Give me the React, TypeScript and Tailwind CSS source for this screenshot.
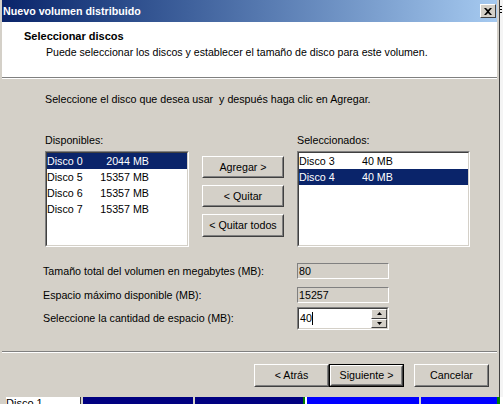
const font = { fontFamily: '"Liberation Sans", Arial, sans-serif' }

const available = [
  { name: "Disco 0", size: "2044 MB", selected: true },
  { name: "Disco 5", size: "15357 MB" },
  { name: "Disco 6", size: "15357 MB" },
  { name: "Disco 7", size: "15357 MB" },
]

const chosen = [
  { name: "Disco 3", size: "40 MB" },
  { name: "Disco 4", size: "40 MB", selected: true },
]

function Sunken({ className, children }: { className?: string; children?: React.ReactNode }) {
  return (
    <div className={`border border-t-[#808080] border-l-[#808080] border-b-white border-r-white ${className ?? ""}`}>
      <div className="h-full border border-t-[#404040] border-l-[#404040] border-b-[#d4d0c8] border-r-[#d4d0c8] bg-white">
        {children}
      </div>
    </div>
  )
}

function Button({ label, className, isDefault }: { label: string; className?: string; isDefault?: boolean }) {
  const inner = (
    <div className="h-full border border-t-white border-l-white border-b-[#404040] border-r-[#404040]">
      <div className="h-full flex items-center justify-center border border-t-[#d4d0c8] border-l-[#d4d0c8] border-b-[#808080] border-r-[#808080] text-[10.7px] text-black whitespace-nowrap">
        {label}
      </div>
    </div>
  )
  if (isDefault) {
    return <div className={`border border-black ${className ?? ""}`}>{inner}</div>
  }
  return <div className={className}>{inner}</div>
}

export default function App() {
  return (
    <div className="w-[503px] h-[404px] overflow-hidden flex flex-col bg-white" style={font}>
      <div className="flex h-[397px]">
        {/* window */}
        <div className="w-[500px] h-[398px] flex flex-col bg-[#d4d0c8] pl-[2px] pr-[2px] border-r border-b border-[#404040]">
          {/* title bar */}
          <div className="h-[22px] shrink-0 flex items-center justify-between pl-[1px] pr-[1px] bg-gradient-to-r from-[#0a246a] to-[#a6caf0]">
            <span className="text-[10.7px] font-bold text-white leading-none">Nuevo volumen distribuido</span>
            <div className="w-[16px] h-[14px] border border-t-white border-l-white border-b-[#404040] border-r-[#404040] bg-[#d4d0c8] flex items-center justify-center">
              <svg width="8" height="7" viewBox="0 0 8 7">
                <path d="M0 0h2l2 2 2-2h2L5 3.5 8 7H6L4 5 2 7H0l3-3.5z" fill="black" />
              </svg>
            </div>
          </div>

          {/* header */}
          <div className="h-[55px] shrink-0 bg-white pt-[8px] text-black">
            <div className="pl-[22px] text-[11px] font-bold leading-[13px]">Seleccionar discos</div>
            <div className="pl-[44px] mt-[3px] text-[10.6px] leading-[13px]">
              Puede seleccionar los discos y establecer el tamaño de disco para este volumen.
            </div>
          </div>
          <div className="h-[2px] shrink-0 border-t border-b border-t-[#808080] border-b-white" />

          {/* body */}
          <div className="h-[272px] shrink-0 pl-[43px] pt-[14px] text-[10.7px] leading-[13px] text-black">
            <div>Seleccione el disco que desea usar &nbsp;y después haga clic en Agregar.</div>

            <div className="flex mt-[28px]">
              <div className="w-[144px]">
                <div>Disponibles:</div>
                <Sunken className="mt-[4px] h-[96px]">
                  {available.map((d) => (
                    <div
                      key={d.name}
                      className={`flex h-[16px] items-center whitespace-nowrap ${d.selected ? "bg-[#0a246a] text-white" : ""}`}
                    >
                      <span className="w-[50px]">{d.name}</span>
                      <span className="w-[52px] text-right">{d.size}</span>
                    </div>
                  ))}
                </Sunken>
              </div>

              <div className="ml-[13px] pt-[22px] flex flex-col gap-[7px]">
                <Button label="Agregar >" className="w-[82px] h-[22px]" />
                <Button label="< Quitar" className="w-[82px] h-[22px]" />
                <Button label="< Quitar todos" className="w-[82px] h-[23px]" />
              </div>

              <div className="ml-[13px] w-[173px]">
                <div>Seleccionados:</div>
                <Sunken className="mt-[4px] h-[96px]">
                  {chosen.map((d) => (
                    <div
                      key={d.name}
                      className={`flex h-[16px] items-center whitespace-nowrap ${d.selected ? "bg-[#0a246a] text-white" : ""}`}
                    >
                      <span className="w-[63px]">{d.name}</span>
                      <span>{d.size}</span>
                    </div>
                  ))}
                </Sunken>
              </div>
            </div>

            {/* fields */}
            <div className="-ml-[2px] mt-[16px] flex flex-col">
              <div className="flex items-center h-[16px]">
                <span className="w-[254px]">Tamaño total del volumen en megabytes (MB):</span>
                <div className="w-[92px] h-[16px] border border-t-[#808080] border-l-[#808080] border-b-white border-r-white pl-[1px] flex items-center">
                  80
                </div>
              </div>
              <div className="flex items-center h-[16px] mt-[8px]">
                <span className="w-[254px]">Espacio máximo disponible (MB):</span>
                <div className="w-[92px] h-[16px] border border-t-[#808080] border-l-[#808080] border-b-white border-r-white pl-[1px] flex items-center">
                  15257
                </div>
              </div>
              <div className="flex items-center h-[23px] mt-[4px]">
                <span className="w-[254px]">Seleccione la cantidad de espacio (MB):</span>
                <Sunken className="w-[92px] h-[23px]">
                  <div className="h-full flex items-center">
                    <span className="pl-[1px]">40</span>
                    <span className="w-[1px] h-[13px] bg-black" />
                    <div className="ml-auto h-full flex flex-col">
                      {["up", "down"].map((dir) => (
                        <div
                          key={dir}
                          className="w-[16px] h-[10px] flex-1 flex items-center justify-center bg-[#d4d0c8] border border-t-white border-l-white border-b-[#404040] border-r-[#404040]"
                        >
                          <svg width="5" height="3" viewBox="0 0 5 3">
                            {dir === "up" ? (
                              <path d="M2.5 0L5 3H0z" fill="black" />
                            ) : (
                              <path d="M0 0h5L2.5 3z" fill="black" />
                            )}
                          </svg>
                        </div>
                      ))}
                    </div>
                  </div>
                </Sunken>
              </div>
            </div>
          </div>

          <div className="h-[2px] shrink-0 border-t border-b border-t-[#808080] border-b-white" />

          {/* footer */}
          <div className="flex-1 flex items-start justify-end pt-[11px] pr-[8px]">
            <Button label="< Atrás" className="w-[75px] h-[23px]" />
            <Button label="Siguiente >" className="w-[75px] h-[23px]" isDefault />
            <Button label="Cancelar" className="w-[75px] h-[23px] ml-[10px]" />
          </div>
        </div>

        {/* sliver of window behind */}
        <div className="flex-1 flex flex-col bg-[#f4f4f4]">
          <div className="mt-[6px] h-[1px] w-[2px] bg-black" />
          <div className="mt-[2px] h-[1px] w-[2px] bg-black" />
          <div className="mt-[2px] h-[1px] w-[2px] bg-black" />
        </div>
      </div>

      {/* strip of the disk map under the dialog */}
      <div className="flex-1 flex bg-[#d4d0c8]">
        <div className="w-[6px] bg-[#d4d0c8]" />
        <div className="w-[74px] bg-white text-[11px] leading-[12px] text-black overflow-hidden whitespace-nowrap">Disco 1</div>
        <div className="w-[1px] bg-[#404040]" />
        <div className="w-[2px]" />
        <div className="w-[110px] bg-[#000080]" />
        <div className="w-[2px]" />
        <div className="w-[108px] bg-[#000080]" />
        <div className="w-[2px] bg-[#008000]" />
        <div className="w-[2px] bg-white" />
        <div className="w-[112px] bg-[#0000ff]" />
        <div className="w-[2px]" />
        <div className="w-[76px] bg-[#0000ff]" />
        <div className="w-[3px] bg-[#008000]" />
        <div className="flex-1 bg-white" />
      </div>
    </div>
  )
}
